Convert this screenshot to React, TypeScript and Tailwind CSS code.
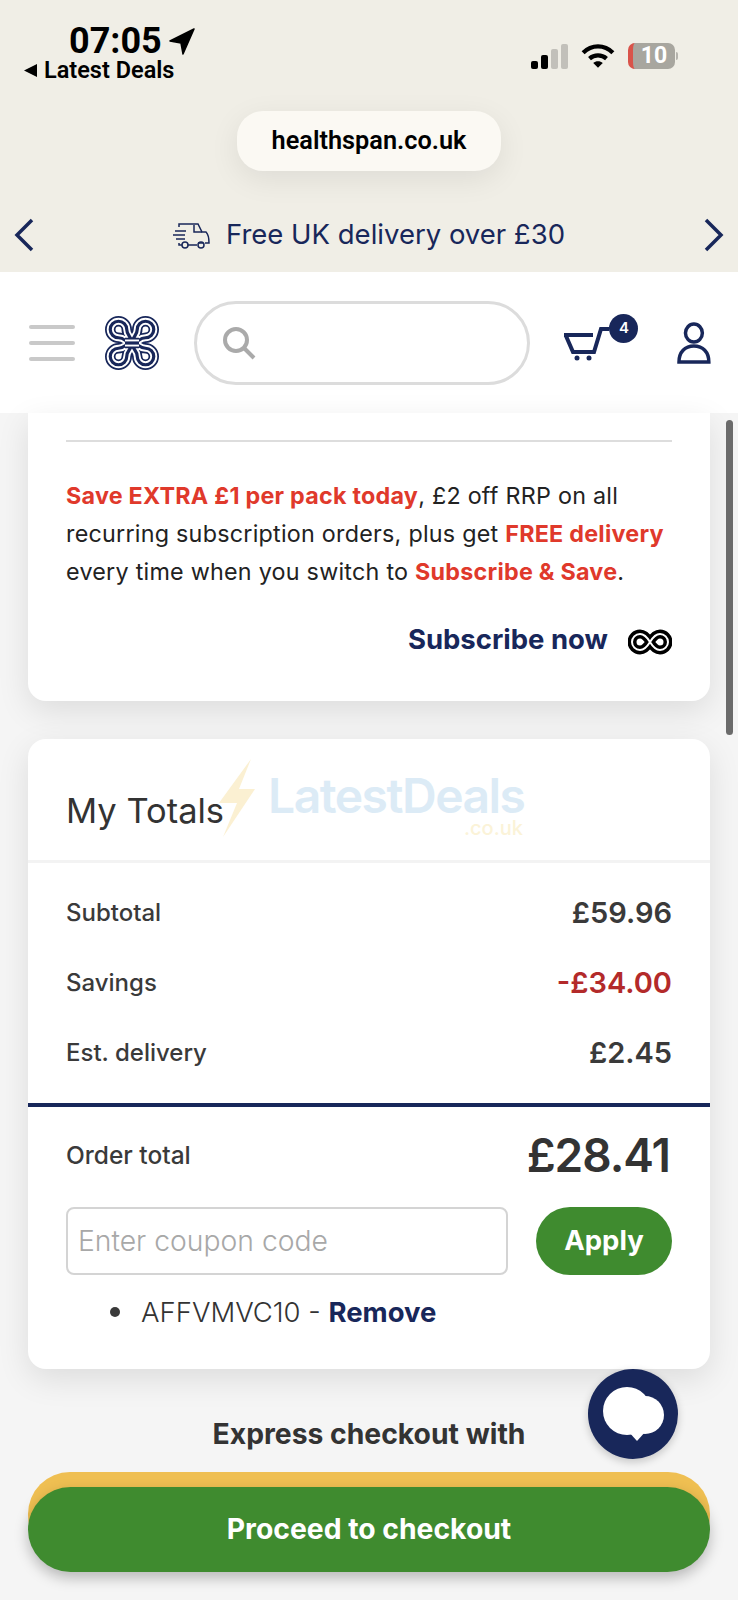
const navy = '#18275a'

function Logo() {
  const knot =
    'M27 27C27 21 32.25 20 32.25 13.5A8.25 8.25 0 1 1 40.5 21.75C34 21.75 33 27 27 27C21 27 20 21.75 13.5 21.75A8.25 8.25 0 1 1 21.75 13.5C21.75 20 27 21 27 27C27 33 21.75 34 21.75 40.5A8.25 8.25 0 1 1 13.5 32.25C20 32.25 21 27 27 27C33 27 34 32.25 40.5 32.25A8.25 8.25 0 1 1 32.25 40.5C32.25 34 27 33 27 27Z'
  return (
    <svg width="54" height="54" viewBox="0 0 54 54" fill="none" className="shrink-0">
      <path d={knot} stroke={navy} strokeWidth="10.5" />
      <path d={knot} stroke="#fff" strokeWidth="7" />
      <path d={knot} stroke={navy} strokeWidth="3.2" />
      {/* horizontal strand passes over the vertical one */}
      <path d="M20 27H34" stroke={navy} strokeWidth="10.5" />
      <path d="M20 27H34" stroke="#fff" strokeWidth="7" />
      <path d="M20 27H34" stroke={navy} strokeWidth="3.2" />
    </svg>
  )
}

function Row({ label, value, red }: { label: string; value: string; red?: boolean }) {
  return (
    <div className="flex h-[70px] items-center justify-between">
      <span className="text-[24px] font-medium text-[#3a3a3a]">{label}</span>
      <span className={red ? 'text-[29px] font-semibold text-[#b32a2a]' : 'text-[29px] font-semibold text-[#3a3a3a]'}>
        {value}
      </span>
    </div>
  )
}

export default function App() {
  return (
    <div className="relative h-[1600px] w-full overflow-hidden bg-[#f5f5f5] font-['Inter',sans-serif]">
      {/* phone status bar + promo strip */}
      <div className="flex h-[272px] flex-col bg-[#f0eee6]">
        <div className="flex h-[111px] justify-between pt-[24px]">
          <div className="pl-[23px] font-['Roboto',sans-serif]">
            <div className="flex items-center gap-[7px] pl-[46px] text-[36px] font-bold leading-[34px] text-black">
              07:05
              <svg width="26" height="27" viewBox="0 0 26 27">
                <path d="M25 1 L1 13 L12 15 L14 26 Z" fill="#000" stroke="#000" strokeWidth="1.5" strokeLinejoin="round" />
              </svg>
            </div>
            <div className="flex items-center gap-[6px] text-[23.5px] font-semibold leading-[24px] text-black">
              <svg width="15" height="15" viewBox="0 0 15 15">
                <path d="M14 1V14L1 7.5Z" fill="#000" />
              </svg>
              Latest Deals
            </div>
          </div>
          <div className="flex h-[44px] items-center gap-[13px] pr-[60px] pt-[20px]">
            <div className="flex items-end gap-[3px]">
              <div className="h-[8px] w-[7px] rounded-[2px] bg-black" />
              <div className="h-[14px] w-[7px] rounded-[2px] bg-black" />
              <div className="h-[20px] w-[7px] rounded-[2px] bg-[#c2c0ba]" />
              <div className="h-[25px] w-[7px] rounded-[2px] bg-[#c2c0ba]" />
            </div>
            <svg width="34" height="26" viewBox="0 0 32 24" fill="none" stroke="#000" strokeWidth="4">
              <path d="M2 9C10 1 22 1 30 9" />
              <path d="M8 14.5C12.500 10.500 19.500 10.500 24 14.5" />
              <path d="M16 23L11.500 18.500C14 16.500 18 16.500 20.500 18.500Z" fill="#000" stroke="none" />
            </svg>
            <div className="flex items-center gap-[1px]">
              <div className="flex h-[26px] w-[47px] items-center justify-center overflow-hidden rounded-[7px] border-l-[5px] border-[#d9534a] bg-[#a8a69f] font-['Roboto',sans-serif] text-[23px] font-bold text-white">
                10
              </div>
              <div className="h-[8px] w-[2px] rounded-r bg-[#b5b3ad]" />
            </div>
          </div>
        </div>
        <div className="flex justify-center">
          <div className="flex h-[60px] w-[264px] items-center justify-center rounded-[26px] bg-[#fbf9f3] font-['Roboto',sans-serif] text-[25.3px] font-semibold text-black shadow-[0_8px_30px_rgba(0,0,0,0.08)]">
            healthspan.co.uk
          </div>
        </div>
        <div className="mt-[43px] flex items-center justify-between pl-[14px] pr-[14px]">
          <svg width="20" height="34" viewBox="0 0 20 34" fill="none" stroke={navy} strokeWidth="3.5">
            <path d="M18 2L3 17L18 32" />
          </svg>
          <div className="flex items-center gap-[16px] text-[27.5px] text-[#18275a]">
            <svg width="37" height="28" viewBox="0 0 37 28" fill="none" stroke={navy} strokeWidth="1.5">
              <path d="M2 10H13M0 14H12M3 18H12M6 6V3H25L29 11H33C35 13 36 15 36 22H32M6 22V24H9M15 24H24M30 22H25" />
              <path d="M21 4V11H29" />
              <circle cx="12" cy="24" r="3" />
              <circle cx="28" cy="24" r="3" />
            </svg>
            Free UK delivery over £30
          </div>
          <svg width="20" height="34" viewBox="0 0 20 34" fill="none" stroke={navy} strokeWidth="3.5">
            <path d="M2 2L17 17L2 32" />
          </svg>
        </div>
      </div>

      {/* site header */}
      <div className="flex h-[141px] items-center bg-white pl-[29px] pr-[27px]">
        <div className="flex w-[46px] shrink-0 flex-col gap-[12px]">
          <div className="h-[4px] rounded bg-[#c9c9c9]" />
          <div className="h-[4px] rounded bg-[#c9c9c9]" />
          <div className="h-[4px] rounded bg-[#c9c9c9]" />
        </div>
        <div className="ml-[30px]">
          <Logo />
        </div>
        <div className="ml-[35px] flex h-[84px] w-[338px] items-center rounded-full border-[3px] border-[#dcdcdc] pl-[25px]">
          <svg width="34" height="34" viewBox="0 0 34 34" fill="none" stroke="#aaaaaa" strokeWidth="4">
            <circle cx="14" cy="14" r="11" />
            <path d="M22 22L32 32" />
          </svg>
        </div>
        <div className="relative ml-[33px] h-[44px] w-[46px]">
          <svg width="46" height="34" viewBox="0 0 46 34" fill="none" stroke={navy} strokeWidth="4" className="absolute left-0 top-[6px]">
            <path d="M1 8H30" />
            <path d="M3 9L10 25H31L38 2H46" />
            <circle cx="14" cy="31" r="2.5" fill={navy} stroke="none" />
            <circle cx="26" cy="31" r="2.5" fill={navy} stroke="none" />
          </svg>
          <div className="absolute left-[46px] top-[-7px] flex h-[29px] w-[29px] items-center justify-center rounded-full bg-[#18275a] text-[15px] font-semibold text-white">
            4
          </div>
        </div>
        <svg width="34" height="42" viewBox="0 0 34 42" fill="none" stroke={navy} strokeWidth="3.5" className="ml-[68px]">
          <ellipse cx="17" cy="11" rx="8.500" ry="9" />
          <path d="M2 40C2 30 8 24 17 24C26 24 32 30 32 40Z" />
        </svg>
      </div>

      {/* scroll area */}
      <div className="flex flex-col px-[28px]">
        <div className="h-[288px] rounded-b-[18px] bg-white px-[38px] pt-[27px] shadow-[0_10px_32px_rgba(0,0,0,0.1)]">
          <div className="h-[2px] bg-[#dddddd]" />
          <p className="mt-[35px] whitespace-nowrap text-[23.3px] leading-[38px] tracking-[0.25px] text-[#222]">
            <span className="font-bold text-[#e0392b]">Save EXTRA £1 per pack today</span>, £2 off RRP on all
            <br />
            recurring subscription orders, plus get <span className="font-bold text-[#e0392b]">FREE delivery</span>
            <br />
            every time when you switch to <span className="font-bold text-[#e0392b]">Subscribe &amp; Save</span>.
          </p>
          <div className="mt-[28px] flex items-center justify-end gap-[20px]">
            <span className="text-[27.5px] font-bold leading-[40px] text-[#18275a]">Subscribe now</span>
            <svg width="44" height="26" viewBox="0 0 44 26" fill="none" className="mt-[6px]">
              <path d="M22 13C19 8 16 5 12 5A8 8 0 0 0 12 21C16 21 19 18 22 13C25 8 28 5 32 5A8 8 0 0 1 32 21C28 21 25 18 22 13Z" stroke="#000" strokeWidth="9" />
              <path d="M22 13C19 8 16 5 12 5A8 8 0 0 0 12 21C16 21 19 18 22 13C25 8 28 5 32 5A8 8 0 0 1 32 21C28 21 25 18 22 13Z" stroke="#fff" strokeWidth="2" />
            </svg>
          </div>
        </div>

        <div className="relative mt-[38px] h-[630px] rounded-[18px] bg-white shadow-[0_10px_32px_rgba(0,0,0,0.1)]">
          {/* watermark over the card */}
          <svg width="38" height="78" viewBox="0 0 38 78" className="absolute left-[189px] top-[20px]">
            <path d="M34 0L2 44H20L6 78L38 30H22Z" fill="#fbf0d2" />
          </svg>
          <div className="absolute left-[240px] top-[32px] text-[48px] font-semibold leading-[50px] tracking-[-1.5px] text-[#dcebf6]">
            LatestDeals
          </div>
          <div className="absolute left-[436px] top-[78px] text-[20px] font-medium leading-[22px] text-[#fbf3d8]">.co.uk</div>

          <div className="relative flex h-[124px] items-center border-b-[3px] border-[#f3f3f3] pl-[38px] pt-[22px] text-[34.5px] text-[#333]">
            My Totals
          </div>
          <div className="px-[38px] pb-[15px] pt-[15px]">
            <Row label="Subtotal" value="£59.96" />
            <Row label="Savings" value="-£34.00" red />
            <Row label="Est. delivery" value="£2.45" />
          </div>
          <div className="h-[4px] bg-[#18275a]" />
          <div className="px-[38px]">
            <div className="flex h-[100px] items-center justify-between pb-[4px]">
              <span className="text-[24.5px] font-medium text-[#3a3a3a]">Order total</span>
              <span className="mr-[2px] text-[46px] font-semibold tracking-[-1px] text-[#333]">£28.41</span>
            </div>
            <div className="flex gap-[28px]">
              <input
                placeholder="Enter coupon code"
                className="h-[68px] w-[442px] rounded-[8px] border-2 border-[#d4d4d4] pl-[10px] text-[28.3px] font-light outline-none placeholder:text-[#a8a8a8]"
              />
              <button className="h-[68px] w-[136px] rounded-full bg-[#3f8b2f] text-[27.5px] font-bold text-white">Apply</button>
            </div>
            <div className="ml-[44px] mt-[19px] flex items-center gap-[21px] text-[27.5px] leading-[36px] text-[#333]">
              <div className="h-[10px] w-[10px] rounded-full bg-[#3a3a3a]" />
              <span className="font-light">
                AFFVMVC10 - <span className="font-bold text-[#18275a]">Remove</span>
              </span>
            </div>
          </div>
        </div>

        <div className="mt-[47px] text-center text-[28.3px] font-bold leading-[36px] text-[#333]">Express checkout with</div>
        <div className="mt-[20px] h-[85px] rounded-[42px] bg-[#efbf52]" />
        <div className="relative z-10 mt-[-70px] flex h-[85px] items-center justify-center rounded-full bg-[#3f8b2f] text-[28.3px] font-bold text-white shadow-[0_6px_14px_rgba(0,0,0,0.25)]">
          Proceed to checkout
        </div>
      </div>

      {/* overlays: chat bubble and scrollbar */}
      <div className="absolute left-[588px] top-[1369px] z-20 flex h-[90px] w-[90px] items-center justify-center rounded-full bg-[#18275a] shadow-[0_3px_8px_rgba(0,0,0,0.2)]">
        <svg width="62" height="54" viewBox="0 0 62 54" fill="#fff">
          <circle cx="25" cy="24" r="24" />
          <circle cx="43" cy="28" r="19" />
          <path d="M26 44H44L35 54Z" />
        </svg>
      </div>
      <div className="absolute left-[726px] top-[420px] h-[315px] w-[7px] rounded-full bg-[#6b6b6b]" />
    </div>
  )
}
